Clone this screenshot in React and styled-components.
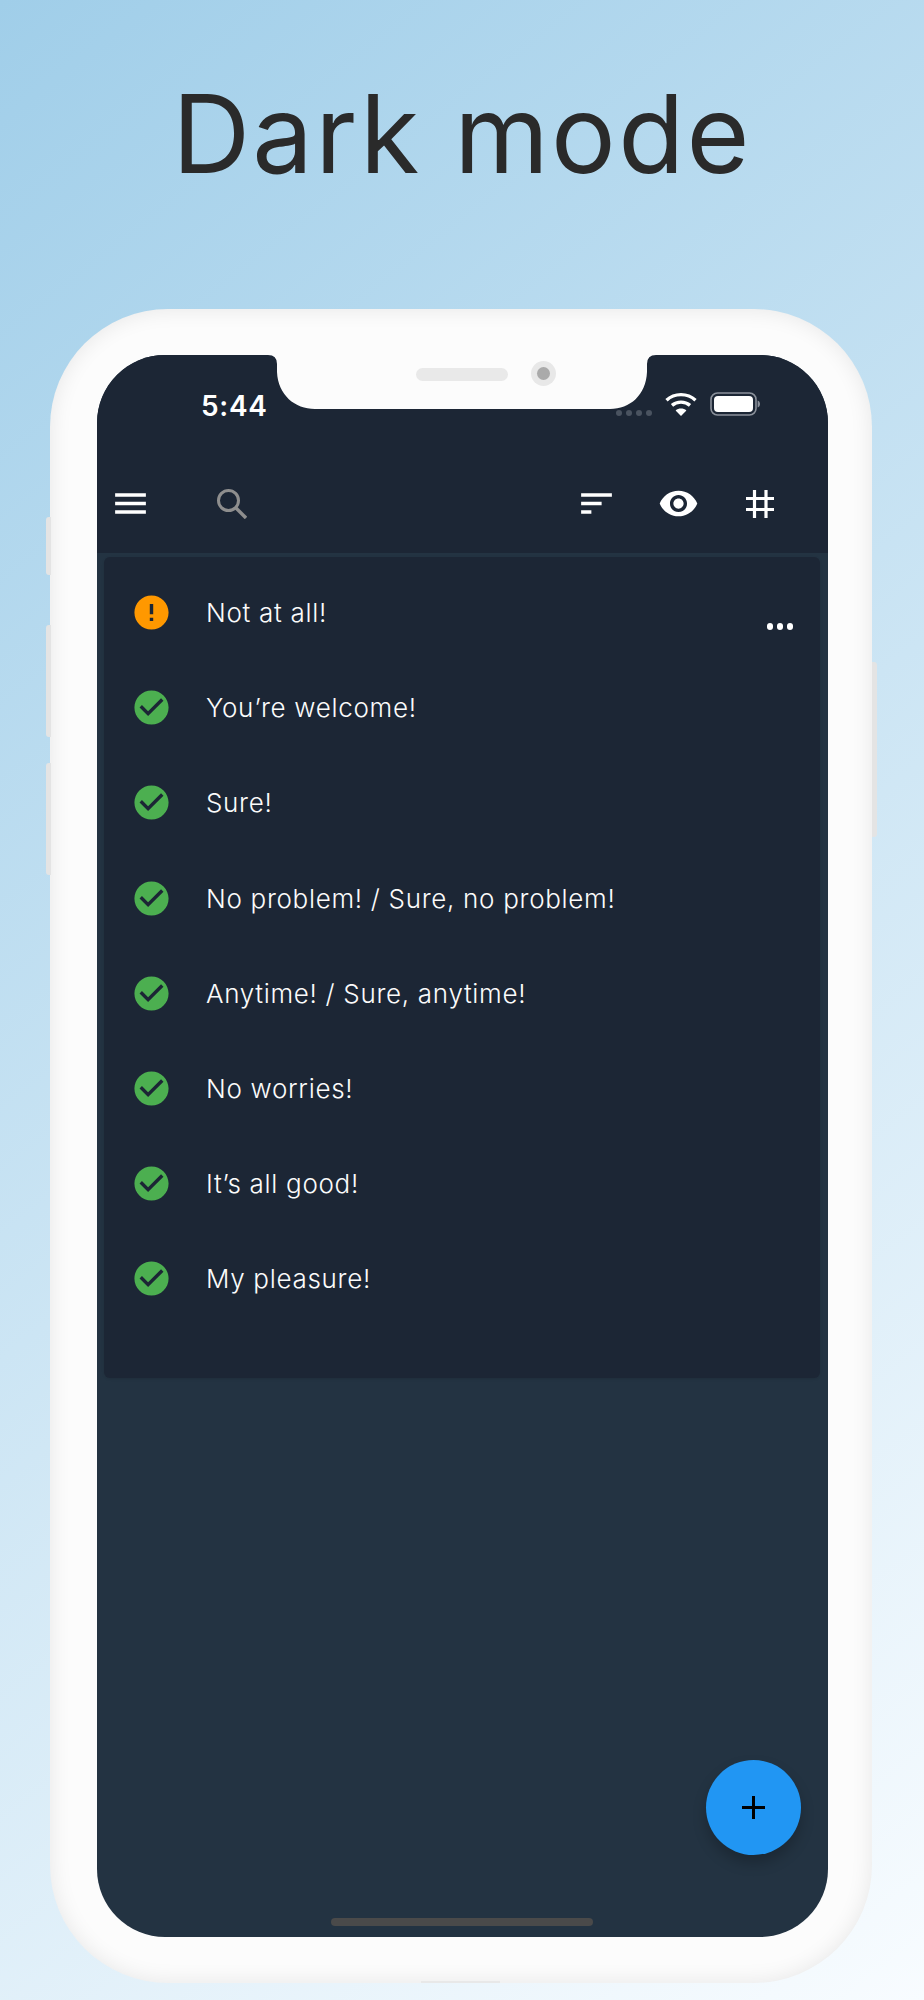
import React from 'react';
import styled, { createGlobalStyle } from 'styled-components';

const Global = createGlobalStyle`
    html, body {
        margin: 0;
        padding: 0;
    }
    body {
        width: 924px;
        height: 2000px;
        overflow: hidden;
        font-family: 'Inter', 'Liberation Sans', sans-serif;
    }
`;

const Page = styled.div`
    width: 924px;
    height: 2000px;
    box-sizing: border-box;
    padding-left: 50px;
    background: linear-gradient(142deg, #a0cee9 0%, #f8fcff 100%);
`;

const Title = styled.h1`
    margin: 0 0 0 -50px;
    height: 309px;
    box-sizing: border-box;
    padding-top: 72px;
    text-align: center;
    font-family: 'Inter', sans-serif;
    font-weight: 400;
    font-size: 108px;
    line-height: 124px;
    letter-spacing: 2.3px;
    color: #2a2a2a;
`;

const Phone = styled.div`
    position: relative;
    width: 822px;
    height: 1674px;
    box-sizing: border-box;
    padding: 46px 44px 46px 47px;
    border-radius: 118px;
    background: #fcfcfc;
    box-shadow: inset 0 0 22px rgba(0, 0, 0, 0.09);
`;

const SideButton = styled.span`
    position: absolute;
    top: ${props => props.top}px;
    height: ${props => props.height}px;
    width: 5px;
    background: #e4e4e4;
    ${props => props.right ? 'right: -5px; border-radius: 0 3px 3px 0;' : 'left: -4px; border-radius: 3px 0 0 3px;'}
`;

const BottomSpeaker = styled.span`
    position: absolute;
    left: 371px;
    bottom: 0;
    width: 79px;
    height: 2px;
    background: #e8e8e8;
`;

const Screen = styled.div`
    position: relative;
    height: 100%;
    display: flex;
    flex-direction: column;
    overflow: hidden;
    border-radius: 68px;
    background: #233342;
`;

const Notch = styled.svg`
    position: absolute;
    top: 0;
    left: 171px;
`;

const Speaker = styled.span`
    position: absolute;
    top: 13px;
    left: 319px;
    width: 92px;
    height: 13px;
    border-radius: 7px;
    background: #e9e9e9;
`;

const Camera = styled.span`
    position: absolute;
    top: 6px;
    left: 434px;
    width: 25px;
    height: 25px;
    display: flex;
    align-items: center;
    justify-content: center;
    border-radius: 50%;
    background: #e8e8e8;

    &::after {
        content: '';
        width: 13px;
        height: 13px;
        border-radius: 50%;
        background: #aaaaaa;
    }
`;

const Header = styled.header`
    background: #1c2635;
`;

const StatusBar = styled.div`
    height: 99px;
    box-sizing: border-box;
    padding: 37px 68px 0 104px;
    display: flex;
    justify-content: space-between;
    align-items: flex-start;
`;

const Time = styled.span`
    margin-top: 2px;
    font-family: 'Inter', sans-serif;
    font-weight: 600;
    font-size: 28px;
    line-height: 24px;
    letter-spacing: 0.7px;
    color: #ffffff;
`;

const StatusIcons = styled.div`
    display: flex;
    align-items: flex-start;
`;

const SignalDots = styled.div`
    display: flex;
    gap: 4px;
    margin: 18px 13px 0 0;
`;

const SignalDot = styled.span`
    width: 6px;
    height: 6px;
    border-radius: 50%;
    background: #4a5360;
`;

const WifiIcon = styled.svg`
    margin-right: 13px;
`;

const Toolbar = styled.div`
    height: 99px;
    display: flex;
    align-items: center;
    padding-right: 27px;
`;

const IconButton = styled.div`
    width: ${props => props.width}px;
    flex: none;
    display: flex;
    justify-content: center;
    color: ${props => props.color || '#ffffff'};
`;

const Spacer = styled.div`
    flex: 1;
`;

const Body = styled.main`
    flex: 1;
    position: relative;
`;

const Card = styled.section`
    position: relative;
    margin: 4px 8px 0 7px;
    height: 821px;
    box-sizing: border-box;
    padding: 8px 0 0 27px;
    border-radius: 6px;
    background: #1c2635;
    box-shadow: 0 1px 3px rgba(0, 0, 0, 0.1);
`;

const MoreDots = styled.div`
    position: absolute;
    top: 66px;
    right: 27px;
    display: flex;
    gap: 3.5px;
`;

const MoreDot = styled.span`
    width: 6.5px;
    height: 6.5px;
    border-radius: 50%;
    background: #ffffff;
`;

const Row = styled.div`
    height: 95.2px;
    display: flex;
    align-items: center;
    gap: 34px;
`;

const StateIcon = styled.svg`
    flex: none;
    color: ${props => props.color};
`;

const RowText = styled.span`
    font-family: 'Inter', sans-serif;
    font-size: 26px;
    font-weight: 350;
    letter-spacing: 0.69px;
    color: #fbfbfb;
`;

const Fab = styled.button`
    position: absolute;
    right: 27px;
    bottom: 82px;
    width: 95px;
    height: 95px;
    padding: 0;
    border: none;
    border-radius: 50%;
    display: flex;
    align-items: center;
    justify-content: center;
    background: #2196f3;
    box-shadow: 0 8px 14px rgba(0, 0, 0, 0.22);
`;

const HomeBar = styled.span`
    position: absolute;
    left: 234px;
    bottom: 11px;
    width: 262px;
    height: 8px;
    border-radius: 4px;
    background: #4a4a4a;
`;

const Icon = ({ d, size = 41 }) => (
    <svg width={size} height={size} viewBox="0 0 24 24" fill="currentColor">
        <path d={d} />
    </svg>
);

const paths = {
    menu: 'M3 18h18v-2H3v2zm0-5h18v-2H3v2zm0-7v2h18V6H3z',
    sort: 'M3 18h6v-2H3v2zM3 6v2h18V6H3zm0 7h12v-2H3v2z',
    eye: 'M12 4.5C7 4.5 2.73 7.61 1 12c1.73 4.39 6 7.5 11 7.5s9.27-3.11 11-7.5c-1.73-4.39-6-7.5-11-7.5zM12 17c-2.76 0-5-2.24-5-5s2.24-5 5-5 5 2.24 5 5-2.24 5-5 5zm0-8c-1.66 0-3 1.34-3 3s1.34 3 3 3 3-1.34 3-3-1.34-3-3-3z',
    check: 'M12 2C6.48 2 2 6.48 2 12s4.48 10 10 10 10-4.48 10-10S17.52 2 12 2zm-2 15l-5-5 1.41-1.41L10 14.17l7.59-7.59L19 8l-9 9z',
    error: 'M12 2C6.48 2 2 6.48 2 12s4.48 10 10 10 10-4.48 10-10S17.52 2 12 2zm1 15h-2v-2h2v2zm0-4h-2V7h2v6z',
};

const items = [
    { text: 'Not at all!', warn: true },
    { text: 'You’re welcome!' },
    { text: 'Sure!' },
    { text: 'No problem! / Sure, no problem!' },
    { text: 'Anytime! / Sure, anytime!' },
    { text: 'No worries!' },
    { text: 'It’s all good!' },
    { text: 'My pleasure!' },
];

const App = () => (
    <Page>
        <Global />
        <Title>Dark mode</Title>
        <Phone>
            <SideButton top={208} height={58} />
            <SideButton top={316} height={112} />
            <SideButton top={454} height={112} />
            <SideButton right top={353} height={175} />
            <Screen>
                <Header>
                    <StatusBar>
                        <Time>5:44</Time>
                        <StatusIcons>
                            <SignalDots>
                                {[0, 1, 2, 3].map(i => <SignalDot key={i} />)}
                            </SignalDots>
                            <WifiIcon width="32" height="24" viewBox="0 0 32 24" fill="none" stroke="#fff" strokeWidth="3.4">
                                <path d="M1.5 8.2C9.5 .8 22.5 .8 30.5 8.2" />
                                <path d="M7 13.4c5-4.4 13-4.4 18 0" />
                                <path d="M16 24l-5.4-5.6c3-2.4 7.8-2.4 10.8 0z" fill="#fff" stroke="none" />
                            </WifiIcon>
                            <svg width="50" height="24" viewBox="0 0 50 24">
                                <rect x="1" y="1" width="45" height="22" rx="6.5" fill="none" stroke="#8a909a" strokeWidth="1.6" />
                                <rect x="4" y="4" width="39" height="16" rx="4" fill="#fff" />
                                <path d="M47.6 8.5c1.6.4 2.4 2 2.4 3.5s-.8 3.1-2.4 3.5z" fill="#8a909a" />
                            </svg>
                        </StatusIcons>
                    </StatusBar>
                    <Toolbar>
                        <IconButton width={66}><Icon d={paths.menu} /></IconButton>
                        <IconButton width={138} color="#8e8e8e">
                            <svg width="30" height="30" viewBox="0 0 30 30" fill="none" stroke="currentColor">
                                <circle cx="11.5" cy="11.5" r="10" strokeWidth="3" />
                                <path d="M19 19l10 10" strokeWidth="3.4" />
                            </svg>
                        </IconButton>
                        <Spacer />
                        <IconButton width={82}><Icon d={paths.sort} /></IconButton>
                        <IconButton width={82}><Icon d={paths.eye} /></IconButton>
                        <IconButton width={82}>
                            <svg width="28" height="28" viewBox="0 0 28 28" fill="none" stroke="currentColor" strokeWidth="3.2">
                                <path d="M8.5 0v28M20 0v28M0 8.5h28M0 19.5h28" />
                            </svg>
                        </IconButton>
                    </Toolbar>
                </Header>
                <Body>
                    <Card>
                        <MoreDots>
                            {[0, 1, 2].map(i => <MoreDot key={i} />)}
                        </MoreDots>
                        {items.map(item => (
                            <Row key={item.text}>
                                <StateIcon width="41" height="41" viewBox="0 0 24 24" fill="currentColor" color={item.warn ? '#ff9800' : '#4caf50'}>
                                    <path d={item.warn ? paths.error : paths.check} />
                                </StateIcon>
                                <RowText>{item.text}</RowText>
                            </Row>
                        ))}
                    </Card>
                    <Fab aria-label="Add">
                        <svg width="23" height="23" viewBox="0 0 23 23" fill="#000">
                            <path d="M10 0h3v10h10v3H13v10h-3V13H0v-3h10z" />
                        </svg>
                    </Fab>
                    <HomeBar />
                </Body>
                <Notch width="388" height="54" viewBox="0 0 388 54">
                    <path d="M0 0Q9 0 9 9V17C10 40 27 54 47 54H342C362 54 378 40 379 17V9Q379 0 388 0Z" fill="#fcfcfc" />
                </Notch>
                <Speaker />
                <Camera />
            </Screen>
            <BottomSpeaker />
        </Phone>
    </Page>
);

export default App;
